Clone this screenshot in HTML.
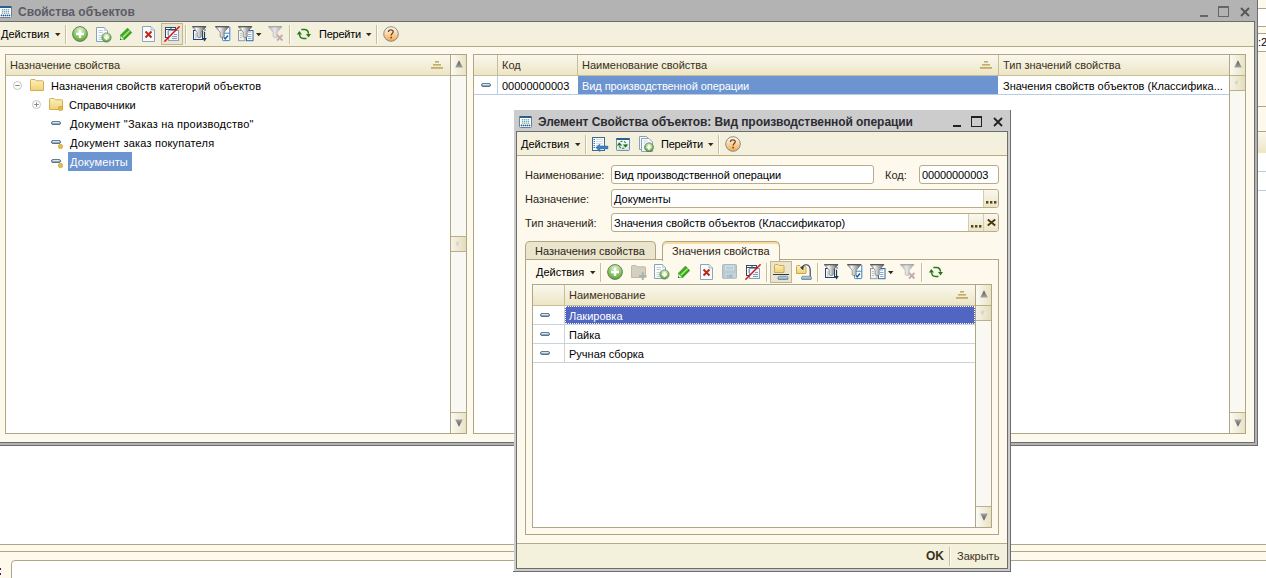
<!DOCTYPE html>
<html><head><meta charset="utf-8">
<style>
*{box-sizing:border-box}
body{margin:0;width:1266px;height:578px;position:relative;overflow:hidden;background:#fff;font-family:"Liberation Sans",sans-serif;font-size:11px;color:#000}
.a{position:absolute}
.t{position:absolute;white-space:nowrap;font-size:11px;line-height:13px}
.kb{border:1px solid #aea684}
.hdr{background:linear-gradient(#f9f8ef,#ede5c4)}
.sep{position:absolute;width:2px;border-left:1px solid #c9bf9c;border-right:1px solid #fffdf6}
svg{position:absolute;overflow:visible}
.sbtn{background:linear-gradient(90deg,#fbfaf3,#e9e2c4)}
.fld{background:#fff;border:1px solid #b8ad88;border-radius:3px}
.btn{background:linear-gradient(#faf8ee,#ebe5cc);border-left:1px solid #d6ccaa}
</style></head><body>
<svg width="0" height="0" style="position:absolute">
<defs>
<radialGradient id="gg" cx="0.5" cy="0.25" r="0.8"><stop offset="0" stop-color="#e4f4d4"/><stop offset="0.5" stop-color="#8fcc6c"/><stop offset="1" stop-color="#4f9e30"/></radialGradient>
<linearGradient id="og" x1="0" y1="0" x2="0" y2="1"><stop offset="0" stop-color="#fffaf0"/><stop offset="0.45" stop-color="#fbd9a8"/><stop offset="1" stop-color="#f3a848"/></linearGradient>
<linearGradient id="fg" x1="0" y1="0" x2="1" y2="0"><stop offset="0" stop-color="#8a8a8a"/><stop offset="0.3" stop-color="#f6f6f6"/><stop offset="0.6" stop-color="#b4b4b4"/><stop offset="1" stop-color="#5e5e5e"/></linearGradient>
<linearGradient id="fgd" x1="0" y1="0" x2="1" y2="0"><stop offset="0" stop-color="#b0b0b0"/><stop offset="0.45" stop-color="#e6e6e6"/><stop offset="1" stop-color="#a8a8a8"/></linearGradient>
<linearGradient id="yf" x1="0" y1="0" x2="0" y2="1"><stop offset="0" stop-color="#fbf0c0"/><stop offset="1" stop-color="#efd274"/></linearGradient>
<linearGradient id="pill" x1="0" y1="0" x2="0" y2="1"><stop offset="0" stop-color="#d4e4ee"/><stop offset="1" stop-color="#7090a8"/></linearGradient>
<linearGradient id="tri2" x1="0" y1="1" x2="0" y2="0"><stop offset="0" stop-color="#555"/><stop offset="1" stop-color="#a4a4a4"/></linearGradient><linearGradient id="tri" x1="0" y1="0" x2="0" y2="1"><stop offset="0" stop-color="#555"/><stop offset="1" stop-color="#a4a4a4"/></linearGradient>
<symbol id="i-plus" viewBox="0 0 16 16"><circle cx="8" cy="8" r="7.4" fill="url(#gg)" stroke="#66735e" stroke-width="0.9"/><path d="M4 8H12M8 4V12" stroke="#fff" stroke-width="2.4"/></symbol>
<symbol id="i-docplus" viewBox="0 0 16 16"><path d="M0.5 0.5H8.5L11.5 3.5V14.5H0.5Z" fill="#fbfdfe" stroke="#86a2b8"/><path d="M8.5 0.5V3.5H11.5" fill="#dce8f0" stroke="#a8bccc" stroke-width="0.6"/><path d="M2.5 3.5H7M2.5 5.5H7M2.5 8.5H6.5M2.5 10.5H6M2.5 12.5H6" stroke="#a8bccb" stroke-width="0.7"/><circle cx="10.5" cy="10.5" r="4.6" fill="url(#gg)" stroke="#6a7a62" stroke-width="0.8"/><path d="M8 10.5H13M10.5 8V13" stroke="#fff" stroke-width="1.8"/></symbol>
<symbol id="i-pencil" viewBox="0 0 12 12"><path d="M7.4 0.2L11.8 4.6L4.2 11.9H0.1V7.5Z" fill="#4fbb2c" stroke="#2e8a18" stroke-width="0.7"/><path d="M1.6 7.6L8.6 1.2M4.2 10.6L10.8 4.2" stroke="#2a8a14" stroke-width="0.9"/><path d="M3 9L9.6 2.6" stroke="#a6ec88" stroke-width="1.3"/><path d="M0.5 7.9L4 11.4H0.5Z" fill="#eef4ea"/><path d="M0 10.2L1.7 11.9H0Z" fill="#1e6a10"/></symbol>
<symbol id="i-docx" viewBox="0 0 13 16"><path d="M0.5 0.5H9L12.5 4V15.5H0.5Z" fill="#f7fbfd" stroke="#8aa6bb"/><path d="M9 0.5V4H12.5" fill="#d8e4ec" stroke="#8aa6bb" stroke-width="0.6"/><path d="M3.5 5.5L9.5 11.5M9.5 5.5L3.5 11.5" stroke="#c02818" stroke-width="2"/></symbol>
<symbol id="i-tabx" viewBox="0 0 16 16"><rect x="1.5" y="1.5" width="10" height="10" fill="#f8fafc" stroke="#34486a"/><path d="M2 2.5H6.5M7.5 2.5H11" stroke="#fff"/><path d="M2 3.5H11M7 2V10" stroke="#34486a"/><path d="M3 6H5.5M3 8H5.5" stroke="#8090a8" stroke-width="0.9"/><rect x="4.5" y="4.5" width="10" height="10" fill="#eef5fa" stroke="#8aa0b6"/><path d="M10 8.5H13M8 10.5H13M8 12.5H13" stroke="#7a90a8" stroke-width="0.9"/><path d="M0.4 15.6L15.6 0.4" stroke="#d41414" stroke-width="1.5"/></symbol>
<symbol id="i-funnel" viewBox="0 0 16 16"><path d="M0.3 0.6H14L9.2 6.2V10.8Q7.2 12.6 5.2 10.8V6.2Z" fill="url(#fg)" stroke="#707070" stroke-width="0.7"/><path d="M0.4 0.6H13.9" stroke="#5a5a5a" stroke-width="1.4"/></symbol>
<symbol id="i-f1" viewBox="0 0 16 16"><rect x="1.5" y="4.5" width="9" height="9" fill="#eef6fb" stroke="#27466c"/><path d="M3 8H4.5M3 10H4.5M3 12H4.5" stroke="#9ab" stroke-width="0.8"/><use href="#i-funnel"/><path d="M12.5 6V12.5" stroke="#1f3a58" stroke-width="1.2"/><path d="M10.2 12H14.8L12.5 15.5Z" fill="#1f3a58"/><path d="M13.5 1L12 2.5L13.5 4L12 5.5" stroke="#3a5a78" stroke-width="0.9" fill="none"/></symbol>
<symbol id="i-f2" viewBox="0 0 16 16"><rect x="7.5" y="0.8" width="7.3" height="13.8" rx="0.8" fill="#fff" stroke="#3a84c4"/><path d="M7.5 7.2H14.8" stroke="#3a84c4"/><path d="M9 11.5L10.2 12.8L13 9.5" stroke="#1e64a8" stroke-width="1.5" fill="none"/><use href="#i-funnel"/></symbol>
<symbol id="i-f3" viewBox="0 0 16 16"><rect x="0.5" y="4.5" width="6.5" height="10.2" fill="#eef4f0" stroke="#9a9a9a"/><rect x="8.5" y="4.5" width="6.5" height="10.2" fill="#fff" stroke="#2f6aa8"/><path d="M2 7.5H4M2 9.5H4M2 11.5H4" stroke="#b0b8b0" stroke-width="0.8"/><path d="M10 6H13.5M10 8.5H13.5M10 10.5H13.5M10 12.5H13.5" stroke="#7090b8" stroke-width="0.8"/><use href="#i-funnel"/></symbol>
<symbol id="i-filterd" viewBox="0 0 16 16"><path d="M0.3 0.6H14L9.2 6.2V10.8Q7.2 12.6 5.2 10.8V6.2Z" fill="url(#fgd)" stroke="#b4b4b4" stroke-width="0.7"/><path d="M0.4 0.6H13.9" stroke="#a8a8a8" stroke-width="1.4"/><path d="M9 9L14.5 14.5M14.5 9L9 14.5" stroke="#c4aab0" stroke-width="1.8"/></symbol>
<symbol id="i-refresh" viewBox="0 0 16 12"><path d="M5.3 1.4H8.5Q12.2 1.4 12.5 5.8" fill="none" stroke="#23801a" stroke-width="1.5"/><path d="M10 6H15L12.5 9.5Z" fill="#237a14"/><path d="M10.5 10.4H7.5Q3.8 10.4 3.5 6.2" fill="none" stroke="#23801a" stroke-width="1.5"/><path d="M0.8 6.6H6L3.4 3.1Z" fill="#237a14"/></symbol>
<symbol id="i-help" viewBox="0 0 16 16"><circle cx="8" cy="8" r="7.3" fill="url(#og)" stroke="#7c8290" stroke-width="0.9"/><path d="M5.4 6C5.4 4.4 6.6 3.9 7.9 3.9C9.3 3.9 10.2 4.7 10.2 5.8C10.2 7.4 8.1 7.5 8.1 9.5" fill="none" stroke="#6a4222" stroke-width="1.25"/><rect x="7.3" y="10.8" width="1.6" height="1.5" fill="#6a4222"/></symbol>
<symbol id="i-folder" viewBox="0 0 14 12"><path d="M0.5 11.5V1.3Q0.5 0.5 1.3 0.5H5L6.2 1.8H12.7Q13.5 1.8 13.5 2.6V11.5Z" fill="url(#yf)" stroke="#d2ad52"/></symbol>
<symbol id="i-pill" viewBox="0 0 10 4"><rect x="0.5" y="0.5" width="9" height="3" rx="1.5" fill="url(#pill)" stroke="#55748c" stroke-width="1"/><path d="M1.8 1.4H8.2" stroke="#e8f2f8" stroke-width="0.8"/></symbol>
<symbol id="i-dot" viewBox="0 0 5 5"><circle cx="2.5" cy="2.5" r="2.2" fill="#e8bc40" stroke="#c89838" stroke-width="0.6"/></symbol>
<symbol id="i-sort" viewBox="0 0 12 8"><g fill="#c2ac6a"><rect x="4" y="0" width="4" height="1.6"/><rect x="2" y="3" width="8" height="1.6"/><rect x="0" y="6" width="12" height="1.8"/></g></symbol>
<symbol id="i-up" viewBox="0 0 8 8"><path d="M4 0.2L7.8 7.6H0.2Z" fill="url(#tri)"/></symbol>
<symbol id="i-down" viewBox="0 0 8 8"><path d="M0.2 0.4H7.8L4 7.8Z" fill="url(#tri2)"/></symbol>
<symbol id="i-listarrow" viewBox="0 0 17 15"><rect x="0.5" y="0.5" width="12" height="13" fill="#fbfdfe" stroke="#46668a"/><path d="M1.5 2.5H3M1.5 4.5H3M1.5 6.5H3M1.5 8.5H3M1.5 10.5H3" stroke="#3a78b8" stroke-width="1"/><path d="M4 2.5H11M4 4.5H11M4 6.5H11M4 8.5H7M9 8.5H11" stroke="#c4ced8" stroke-width="0.7"/><path d="M3.7 10.4L7.9 7V9H16V11.9H7.9V14.7Z" fill="#3c82c0" stroke="#2a6aa0" stroke-width="0.4"/></symbol>
<symbol id="i-winref" viewBox="0 0 14 13"><defs><linearGradient id="wrg" x1="0" y1="0" x2="0" y2="1"><stop offset="0" stop-color="#fff"/><stop offset="1" stop-color="#d4e2ee"/></linearGradient></defs><rect x="0.5" y="0.5" width="13" height="12" rx="0.8" fill="url(#wrg)" stroke="#7890a0"/><rect x="0.3" y="0" width="13.4" height="2" fill="#2a6090"/><circle cx="6.5" cy="6.8" r="3.6" fill="none" stroke="#2a8a18" stroke-width="1.1" stroke-dasharray="2.2 1.4"/><path d="M0.8 7.6H6.2L3.5 4.4Z" fill="#1e7010"/><path d="M6.8 6.5H12.2L9.5 9.4Z" fill="#1e7010"/></symbol>
<symbol id="i-copyplus" viewBox="0 0 15 16"><path d="M0.5 0.5H7.5L9.5 2.5V13.5H0.5Z" fill="#f4f8fb" stroke="#8aa0b8"/><path d="M2.5 2.5H10L13.5 6V15.5H2.5Z" fill="#f7fafc" stroke="#8aa6bb"/><path d="M4.5 5H8.5M4.5 7H6.5" stroke="#b8c6d4" stroke-width="0.8"/><circle cx="10" cy="11.3" r="4.4" fill="url(#gg)" stroke="#5f7058" stroke-width="0.8"/><path d="M7.6 11.3H12.4M10 8.9V13.7" stroke="#fff" stroke-width="1.8"/></symbol>
<symbol id="i-folderplus" viewBox="0 0 16 16"><path d="M0.5 12.5V1.3Q0.5 0.5 1.3 0.5H5L6.2 1.8H13.7Q14.5 1.8 14.5 2.6V12.5Z" fill="#d4cfbf" stroke="#c0baa6"/><path d="M8 11H15.5M11.75 7.2V15" stroke="#aab4aa" stroke-width="2"/></symbol>
<symbol id="i-floppy" viewBox="0 0 15 15"><rect x="0.5" y="0.5" width="14" height="14" rx="1" fill="#b9cad3" stroke="#a8bac4"/><rect x="3" y="1.5" width="9" height="5" fill="#d6e2e8"/><path d="M4 3.3H11M4 5H11" stroke="#a8bac4" stroke-width="0.8"/><rect x="3" y="9" width="11" height="5.5" fill="#c4d2da"/><text x="4.5" y="14" font-size="5.5" font-family="Liberation Sans" font-weight="bold" fill="#9aaab4">ok</text></symbol>
<symbol id="i-grpbtn" viewBox="0 0 16 16"><path d="M1.5 8.5V1.3Q1.5 0.5 2.3 0.5H5L6 1.5H10.2Q11 1.5 11 2.3V8.5Z" fill="url(#yf)" stroke="#cfa84c"/><path d="M0 10.5H16" stroke="#1f3f68" stroke-width="1"/><rect x="5" y="12.3" width="10" height="3.5" rx="1.5" fill="url(#pill)" stroke="#5e7f98" stroke-width="0.8"/></symbol>
<symbol id="i-grpup" viewBox="0 0 16 16"><path d="M0.5 9.5V2.3Q0.5 1.5 1.3 1.5H4L5 2.5H9.2Q10 2.5 10 3.3V9.5Z" fill="url(#yf)" stroke="#cfa84c"/><path d="M6 4Q7 0.5 10.5 0.8Q14 1.2 14.2 6V12.5" fill="none" stroke="#243e5c" stroke-width="1.1"/><path d="M4 3.5L7.8 2.5L7.2 6.2Z" fill="#243e5c"/><rect x="5.5" y="12.3" width="10" height="3.5" rx="1.5" fill="url(#pill)" stroke="#5e7f98" stroke-width="0.8"/></symbol>
<symbol id="i-thumb" viewBox="0 0 15 16"><rect x="0" y="0" width="15" height="16" fill="url(#thg)"/><path d="M0 0.5H15M0 15.5H15" stroke="#b9b08c"/><circle cx="7.6" cy="7.8" r="2.3" fill="url(#thc)"/></symbol><linearGradient id="thc" x1="0" y1="0" x2="1" y2="0.3"><stop offset="0" stop-color="#c4bfaa"/><stop offset="1" stop-color="#f3f0e4"/></linearGradient>
<linearGradient id="thg" x1="0" y1="0" x2="1" y2="0"><stop offset="0" stop-color="#f6f3e6"/><stop offset="1" stop-color="#e4dcbc"/></linearGradient>
<symbol id="i-win" viewBox="0 0 13 12"><rect x="0.5" y="0.5" width="12" height="11" rx="1" fill="#fff" stroke="#6a8098"/><rect x="0.5" y="0" width="12" height="2" fill="#2a6090"/><g fill="#d0f4fb"><rect x="2.5" y="3" width="8" height="5"/></g><g fill="#9a9a9a"><circle cx="3.5" cy="3.6" r="0.65"/><circle cx="5.5" cy="3.6" r="0.65"/><circle cx="7.5" cy="3.6" r="0.65"/><circle cx="9.5" cy="3.6" r="0.65"/><circle cx="3.5" cy="5.4" r="0.65"/><circle cx="5.5" cy="5.4" r="0.65"/><circle cx="7.5" cy="5.4" r="0.65"/><circle cx="9.5" cy="5.4" r="0.65"/><circle cx="3.5" cy="7.2" r="0.65"/><circle cx="5.5" cy="7.2" r="0.65"/><circle cx="7.5" cy="7.2" r="0.65"/><circle cx="9.5" cy="7.2" r="0.65"/></g><g fill="#1f5d99"><circle cx="2.5" cy="9.4" r="0.85"/><circle cx="4.5" cy="9.4" r="0.85"/><circle cx="6.5" cy="9.4" r="0.85"/><circle cx="8.5" cy="9.4" r="0.85"/><circle cx="10.5" cy="9.4" r="0.85"/></g></symbol>
</defs></svg>


<!-- background window strip on right -->
<div class="a" style="left:1258px;top:0;width:8px;height:578px;background:#fff"></div>
<div class="a" style="left:1258px;top:0;width:8px;height:8px;background:#fdf9ec"></div>
<div class="a" style="left:1258px;top:8px;width:8px;height:1px;background:#aea684"></div>
<div class="a" style="left:1258px;top:26px;width:8px;height:1px;background:#aea684"></div>
<div class="a" style="left:1258px;top:27px;width:8px;height:6px;background:#fdf9ec"></div>
<div class="a" style="left:1258px;top:33px;width:8px;height:1px;background:#aea684"></div>
<div class="t" style="left:1258px;top:36px">:2</div>
<div class="a" style="left:1258px;top:51px;width:8px;height:1px;background:#aea684"></div>
<div class="a" style="left:1258px;top:52px;width:8px;height:54px;background:#fdf9ec"></div>
<div class="a" style="left:1258px;top:106px;width:8px;height:1px;background:#aea684"></div>
<div class="a" style="left:1258px;top:107px;width:8px;height:24px;background:#fdf9ec"></div>
<div class="a" style="left:1258px;top:131px;width:8px;height:1px;background:#aea684"></div>
<div class="a hdr" style="left:1258px;top:132px;width:8px;height:21px"></div>
<div class="a" style="left:1258px;top:171px;width:8px;height:1px;background:#b8cce4"></div>
<div class="a" style="left:1258px;top:190px;width:8px;height:1px;background:#b8cce4"></div>

<!-- bottom area -->
<div class="a" style="left:0;top:544px;width:1266px;height:34px;background:#fdf9ec"></div>
<div class="a" style="left:0;top:544px;width:1266px;height:1px;background:#aea684"></div>
<div class="a" style="left:0;top:551px;width:1266px;height:1px;background:#aea684"></div>
<div class="a" style="left:11px;top:560px;width:1300px;height:30px;background:#fff;border:1px solid #aea684;border-radius:4px"></div>
<div class="a" style="left:0;top:568px;width:1px;height:2px;background:#6a1050"></div><div class="a" style="left:0;top:573px;width:1px;height:2px;background:#6a1050"></div>

<!-- MAIN WINDOW -->
<div class="a" style="left:0;top:0;width:1258px;height:446px;background:#b3b3b3"></div>
<div class="a" style="left:1257px;top:0;width:1px;height:446px;background:#6d6d6d"></div>
<div class="a" style="left:0;top:445px;width:1258px;height:1px;background:#6d6d6d"></div>
<div class="a" style="left:0;top:21px;width:1255px;height:422px;background:#6d6d6d"></div>
<div class="a" style="left:0;top:22px;width:1254px;height:420px;background:#fdf9ec"></div>
<div class="a" style="left:0;top:22px;width:1254px;height:24px;background:#f3f0dd"></div>
<div class="a" style="left:0;top:46px;width:1254px;height:1px;background:#b3aa86"></div>

<!-- title -->
<svg style="left:-1px;top:6px" width="13" height="12"><use href="#i-win"/></svg>
<div class="t" style="left:18px;top:6px;font-size:12px;font-weight:bold;color:#5b5b66">Свойства объектов</div>
<div class="a" style="left:1200px;top:15px;width:8px;height:2px;background:#666"></div>
<div class="a" style="left:1218px;top:6px;width:11px;height:11px;border:1px solid #666;border-top-width:2px"></div>
<svg style="left:1240px;top:7px" width="10" height="10" viewBox="0 0 10 10"><path d="M1 1L9 9M9 1L1 9" stroke="#555" stroke-width="1.8"/></svg>

<!-- main toolbar -->
<div class="t" style="left:1px;top:28px">Действия</div>
<svg style="left:55px;top:33px" width="6" height="4"><path d="M0 0H5.5L2.75 3.2Z" fill="#3a2a10"/></svg>
<div class="sep" style="left:65px;top:25px;height:19px"></div>
<div class="t" style="left:319px;top:28px;letter-spacing:-0.25px">Перейти</div>
<svg style="left:366px;top:33px" width="6" height="4"><path d="M0 0H5.5L2.75 3.2Z" fill="#3a2a10"/></svg>

<!-- LEFT PANEL -->
<div class="a kb" style="left:5px;top:54px;width:462px;height:380px;background:#fff"></div>
<div class="a hdr" style="left:6px;top:55px;width:444px;height:20px"></div>
<div class="a" style="left:6px;top:75px;width:444px;height:1px;background:#c8bd98"></div>
<div class="t" style="left:10px;top:59px;color:#3a3020">Назначение свойства</div>
<div class="a" style="left:450px;top:55px;width:1px;height:378px;background:#aea684"></div>
<div class="a" style="left:451px;top:76px;width:15px;height:336px;background:#f9f8f2"></div>
<div class="a sbtn" style="left:451px;top:55px;width:15px;height:21px;border-bottom:1px solid #b9b08c"></div>

<!-- tree -->
<div class="t" style="left:51px;top:80px;letter-spacing:0.08px">Назначения свойств категорий объектов</div>
<div class="t" style="left:69px;top:99px">Справочники</div>
<div class="t" style="left:70px;top:118px;letter-spacing:0.22px">Документ "Заказ на производство"</div>
<div class="t" style="left:70px;top:137px;letter-spacing:0.19px">Документ заказ покупателя</div>
<div class="a" style="left:68px;top:152px;width:64px;height:19px;background:#6b94d0"></div>
<div class="t" style="left:70px;top:156px;color:#fff;letter-spacing:0.13px">Документы</div>

<!-- RIGHT PANEL -->
<div class="a kb" style="left:473px;top:54px;width:773px;height:380px;background:#fff"></div>
<div class="a hdr" style="left:474px;top:55px;width:755px;height:20px"></div>
<div class="a" style="left:474px;top:75px;width:755px;height:1px;background:#c8bd98"></div>
<div class="a" style="left:497px;top:55px;width:1px;height:20px;background:#c8bd98"></div>
<div class="a" style="left:577px;top:55px;width:1px;height:20px;background:#c8bd98"></div>
<div class="a" style="left:998px;top:55px;width:1px;height:20px;background:#c8bd98"></div>
<div class="t" style="left:502px;top:59px;color:#3a3020">Код</div>
<div class="t" style="left:582px;top:59px;color:#3a3020">Наименование свойства</div>
<div class="t" style="left:1003px;top:59px;color:#3a3020">Тип значений свойства</div>
<div class="a" style="left:1229px;top:55px;width:1px;height:378px;background:#aea684"></div>
<div class="a" style="left:1230px;top:76px;width:15px;height:336px;background:#f9f8f2"></div>
<div class="a sbtn" style="left:1230px;top:55px;width:15px;height:21px;border-bottom:1px solid #b9b08c"></div>
<div class="a" style="left:474px;top:94px;width:755px;height:1px;background:#b8cce4"></div>
<div class="a" style="left:497px;top:76px;width:1px;height:18px;background:#b8cce4"></div>
<div class="a" style="left:578px;top:76px;width:420px;height:18px;background:#6b94d0"></div>
<div class="t" style="left:502px;top:80px">00000000003</div>
<div class="t" style="left:582px;top:80px;color:#fff;letter-spacing:-0.07px">Вид производственной операции</div>
<div class="t" style="left:1003px;top:80px">Значения свойств объектов (Классифика...</div>



<svg style="left:72px;top:26px" width="16" height="16"><use href="#i-plus"/></svg>
<svg style="left:96px;top:27px" width="16" height="16"><use href="#i-docplus"/></svg>
<svg style="left:120px;top:28px" width="12" height="12"><use href="#i-pencil"/></svg>
<svg style="left:142px;top:26px" width="13" height="16"><use href="#i-docx"/></svg>
<div class="a" style="left:161px;top:23px;width:22px;height:22px;background:#ebe5cf;border:1px solid #c2b68e"></div>
<svg style="left:164px;top:26px" width="16" height="16"><use href="#i-tabx"/></svg>
<div class="sep" style="left:185px;top:25px;height:19px"></div>
<svg style="left:192px;top:26px" width="16" height="16"><use href="#i-f1"/></svg>
<svg style="left:215px;top:26px" width="16" height="16"><use href="#i-f2"/></svg>
<svg style="left:238px;top:26px" width="16" height="16"><use href="#i-f3"/></svg>
<svg style="left:256px;top:33px" width="6" height="4"><path d="M0 0H5.5L2.75 3.2Z" fill="#3a2a10"/></svg>
<svg style="left:268px;top:26px" width="16" height="16"><use href="#i-filterd"/></svg>
<div class="sep" style="left:289px;top:25px;height:19px"></div>
<svg style="left:296px;top:28px" width="16" height="12"><use href="#i-refresh"/></svg>
<div class="sep" style="left:376px;top:25px;height:19px"></div>
<svg style="left:383px;top:26px" width="16" height="16"><use href="#i-help"/></svg>

<!-- tree icons -->
<svg style="left:13px;top:81px" width="9" height="9" viewBox="0 0 9 9"><circle cx="4.5" cy="4.5" r="4" fill="#fff" stroke="#c4c4c4"/><path d="M2.2 4.5H6.8" stroke="#8a8a8a"/></svg>
<svg style="left:30px;top:79px" width="14" height="12"><use href="#i-folder"/></svg>
<svg style="left:32px;top:100px" width="9" height="9" viewBox="0 0 9 9"><circle cx="4.5" cy="4.5" r="4" fill="#fff" stroke="#c4c4c4"/><path d="M2.2 4.5H6.8M4.5 2.2V6.8" stroke="#8a8a8a"/></svg>
<svg style="left:49px;top:98px" width="14" height="12"><use href="#i-folder"/></svg>
<svg style="left:58px;top:106px" width="5" height="5"><use href="#i-dot"/></svg>
<svg style="left:51px;top:121px" width="10" height="4"><use href="#i-pill"/></svg>
<svg style="left:51px;top:140px" width="10" height="4"><use href="#i-pill"/></svg>
<svg style="left:58px;top:144px" width="5" height="5"><use href="#i-dot"/></svg>
<svg style="left:51px;top:159px" width="10" height="4"><use href="#i-pill"/></svg>
<svg style="left:58px;top:163px" width="5" height="5"><use href="#i-dot"/></svg>

<!-- panel header icons -->
<svg style="left:431px;top:61px" width="12" height="8"><use href="#i-sort"/></svg>
<svg style="left:455px;top:60px" width="8" height="8"><use href="#i-up"/></svg>
<svg style="left:980px;top:61px" width="12" height="8"><use href="#i-sort"/></svg>
<svg style="left:1234px;top:60px" width="8" height="8"><use href="#i-up"/></svg>
<svg style="left:481px;top:83px" width="10" height="4"><use href="#i-pill"/></svg>


<div class="a" style="left:451px;top:412px;width:15px;height:21px;background:linear-gradient(90deg,#fbfaf3,#e9e2c4);border-top:1px solid #b9b08c"></div>
<svg style="left:455px;top:419px" width="8" height="8"><use href="#i-down"/></svg>
<svg style="left:451px;top:236px" width="15" height="16"><use href="#i-thumb"/></svg>
<div class="a" style="left:1230px;top:412px;width:15px;height:21px;background:linear-gradient(90deg,#fbfaf3,#e9e2c4);border-top:1px solid #b9b08c"></div>
<svg style="left:1234px;top:419px" width="8" height="8"><use href="#i-down"/></svg>
<svg style="left:1230px;top:75px" width="15" height="16"><use href="#i-thumb"/></svg>

<!-- DIALOG -->
<div class="a" style="left:514px;top:110px;width:497px;height:462px;background:#cccccc"></div>
<div class="a" style="left:1010px;top:110px;width:1px;height:462px;background:#6d6d6d"></div>
<div class="a" style="left:513px;top:571px;width:498px;height:1px;background:#6d6d6d"></div>
<div class="a" style="left:516px;top:131px;width:492px;height:438px;border:1px solid #6d6d6d;background:#fdf9ec"></div>
<div class="a" style="left:517px;top:132px;width:490px;height:23px;background:#f3f0dd"></div>
<div class="a" style="left:517px;top:155px;width:490px;height:1px;background:#b3aa86"></div>
<div class="a" style="left:517px;top:543px;width:490px;height:1px;background:#b3aa86"></div>
<div class="a" style="left:517px;top:544px;width:490px;height:24px;background:#f3f0dc"></div>
<svg style="left:519px;top:116px" width="13" height="12"><use href="#i-win"/></svg>
<div class="t" style="left:538px;top:116px;font-size:12px;font-weight:bold;color:#2c2c34;letter-spacing:-0.07px">Элемент Свойства объектов: Вид производственной операции</div>
<div class="a" style="left:953px;top:125px;width:8px;height:2px;background:#222"></div>
<div class="a" style="left:971px;top:116px;width:11px;height:11px;border:1px solid #222;border-top-width:2px"></div>
<svg style="left:993px;top:117px" width="10" height="10" viewBox="0 0 10 10"><path d="M1 1L9 9M9 1L1 9" stroke="#222" stroke-width="1.8"/></svg>

<div class="t" style="left:521px;top:138px">Действия</div>
<svg style="left:575px;top:143px" width="6" height="4"><path d="M0 0H5.5L2.75 3.2Z" fill="#3a2a10"/></svg>
<div class="sep" style="left:585px;top:135px;height:19px"></div>
<div class="t" style="left:661px;top:138px;letter-spacing:-0.25px">Перейти</div>
<svg style="left:708px;top:143px" width="6" height="4"><path d="M0 0H5.5L2.75 3.2Z" fill="#3a2a10"/></svg>
<div class="sep" style="left:718px;top:135px;height:19px"></div>

<div class="t" style="left:525px;top:169px;color:#2a2418">Наименование:</div>
<div class="t" style="left:525px;top:193px;color:#2a2418">Назначение:</div>
<div class="t" style="left:525px;top:217px;color:#2a2418">Тип значений:</div>
<div class="t" style="left:885px;top:169px;color:#2a2418">Код:</div>
<div class="a fld" style="left:611px;top:165px;width:263px;height:19px"></div>
<div class="t" style="left:614px;top:169px;letter-spacing:-0.07px">Вид производственной операции</div>
<div class="a fld" style="left:919px;top:165px;width:80px;height:19px"></div>
<div class="t" style="left:922px;top:169px;letter-spacing:-0.1px">00000000003</div>
<div class="a fld" style="left:611px;top:189px;width:388px;height:19px"></div>
<div class="a btn" style="left:983px;top:190px;width:15px;height:17px;border-radius:0 3px 3px 0"></div>
<div class="t" style="left:614px;top:193px">Документы</div>
<div class="a fld" style="left:611px;top:213px;width:388px;height:19px"></div>
<div class="a btn" style="left:968px;top:214px;width:15px;height:17px"></div>
<div class="a btn" style="left:983px;top:214px;width:15px;height:17px;border-radius:0 3px 3px 0"></div>
<div class="t" style="left:614px;top:217px">Значения свойств объектов (Классификатор)</div>

<!-- tabs -->
<div class="a" style="left:525px;top:241px;width:131px;height:19px;background:#ebe5cd;border:1px solid #aea684;border-bottom:none;border-radius:5px 5px 0 0"></div>
<div class="t" style="left:535px;top:245px;color:#2a2418">Назначения свойства</div>
<div class="a" style="left:525px;top:259px;width:474px;height:276px;border:1px solid #aea684"></div>
<div class="a" style="left:662px;top:241px;width:118px;height:20px;background:#fdf9ec;border:1px solid #aea684;border-bottom:none;border-radius:5px 5px 0 0;box-shadow:inset 0 2px 0 #f9daa2"></div>
<div class="t" style="left:672px;top:245px;color:#2a2418">Значения свойства</div>
<div class="t" style="left:536px;top:266px">Действия</div>

<!-- table -->
<div class="a kb" style="left:532px;top:284px;width:460px;height:244px;background:#fff"></div>
<div class="a hdr" style="left:533px;top:285px;width:442px;height:20px"></div>
<div class="a" style="left:533px;top:305px;width:442px;height:1px;background:#c8bd98"></div>
<div class="a" style="left:564px;top:285px;width:1px;height:20px;background:#c8bd98"></div>
<div class="t" style="left:569px;top:289px;color:#3a3020">Наименование</div>
<div class="a" style="left:975px;top:285px;width:1px;height:242px;background:#aea684"></div>
<div class="a" style="left:976px;top:306px;width:15px;height:200px;background:#f9f8f2"></div>
<div class="a sbtn" style="left:976px;top:285px;width:15px;height:21px;border-bottom:1px solid #b9b08c"></div>
<div class="a" style="left:533px;top:324px;width:442px;height:1px;background:#cbd2d9"></div>
<div class="a" style="left:533px;top:343px;width:442px;height:1px;background:#cbd2d9"></div>
<div class="a" style="left:533px;top:362px;width:442px;height:1px;background:#cbd2d9"></div>
<div class="a" style="left:564px;top:306px;width:1px;height:56px;background:#cbd2d9"></div>
<div class="a" style="left:565px;top:306px;width:410px;height:18px;background:#5066c0;border:1px dotted #fff"></div>
<div class="t" style="left:569px;top:310px;color:#fff">Лакировка</div>
<div class="t" style="left:569px;top:329px">Пайка</div>
<div class="t" style="left:569px;top:348px">Ручная сборка</div>


<svg style="left:592px;top:137px" width="17" height="15"><use href="#i-listarrow"/></svg>
<svg style="left:616px;top:138px" width="14" height="13"><use href="#i-winref"/></svg>
<svg style="left:639px;top:136px" width="15" height="16"><use href="#i-copyplus"/></svg>
<svg style="left:725px;top:136px" width="16" height="16"><use href="#i-help"/></svg>

<svg style="left:590px;top:271px" width="6" height="4"><path d="M0 0H5.5L2.75 3.2Z" fill="#3a2a10"/></svg>
<div class="sep" style="left:600px;top:263px;height:19px"></div>
<svg style="left:607px;top:264px" width="16" height="16"><use href="#i-plus"/></svg>
<svg style="left:631px;top:265px" width="16" height="16"><use href="#i-folderplus"/></svg>
<svg style="left:654px;top:264px" width="16" height="16"><use href="#i-docplus"/></svg>
<svg style="left:678px;top:266px" width="12" height="12"><use href="#i-pencil"/></svg>
<svg style="left:700px;top:264px" width="13" height="16"><use href="#i-docx"/></svg>
<svg style="left:722px;top:264px" width="15" height="15"><use href="#i-floppy"/></svg>
<svg style="left:745px;top:264px" width="16" height="16"><use href="#i-tabx"/></svg>
<div class="sep" style="left:766px;top:263px;height:19px"></div>
<div class="a" style="left:770px;top:261px;width:22px;height:22px;background:#ebe5cf;border:1px solid #c2b68e"></div>
<svg style="left:773px;top:264px" width="16" height="16"><use href="#i-grpbtn"/></svg>
<svg style="left:796px;top:264px" width="16" height="16"><use href="#i-grpup"/></svg>
<div class="sep" style="left:817px;top:263px;height:19px"></div>
<svg style="left:824px;top:264px" width="16" height="16"><use href="#i-f1"/></svg>
<svg style="left:847px;top:264px" width="16" height="16"><use href="#i-f2"/></svg>
<svg style="left:870px;top:264px" width="16" height="16"><use href="#i-f3"/></svg>
<svg style="left:888px;top:271px" width="6" height="4"><path d="M0 0H5.5L2.75 3.2Z" fill="#3a2a10"/></svg>
<svg style="left:900px;top:264px" width="16" height="16"><use href="#i-filterd"/></svg>
<div class="sep" style="left:921px;top:263px;height:19px"></div>
<svg style="left:928px;top:266px" width="16" height="12"><use href="#i-refresh"/></svg>

<svg style="left:956px;top:291px" width="12" height="8"><use href="#i-sort"/></svg>
<svg style="left:980px;top:290px" width="8" height="8"><use href="#i-up"/></svg>
<svg style="left:980px;top:513px" width="8" height="8"><use href="#i-down"/></svg>
<svg style="left:540px;top:313px" width="10" height="4"><use href="#i-pill"/></svg>
<svg style="left:540px;top:332px" width="10" height="4"><use href="#i-pill"/></svg>
<svg style="left:540px;top:351px" width="10" height="4"><use href="#i-pill"/></svg>

<svg style="left:986px;top:201px" width="11" height="3"><g fill="#5a4818"><rect x="0" y="0" width="2.4" height="2.6"/><rect x="4" y="0" width="2.4" height="2.6"/><rect x="8" y="0" width="2.4" height="2.6"/></g></svg>
<svg style="left:971px;top:225px" width="11" height="3"><g fill="#5a4818"><rect x="0" y="0" width="2.4" height="2.6"/><rect x="4" y="0" width="2.4" height="2.6"/><rect x="8" y="0" width="2.4" height="2.6"/></g></svg>
<svg style="left:987px;top:219px" width="9" height="7" viewBox="0 0 9 7"><path d="M0.8 0.5L8.2 6.5M8.2 0.5L0.8 6.5" stroke="#4a3a08" stroke-width="1.9"/></svg>

<div class="a" style="left:976px;top:506px;width:15px;height:21px;background:linear-gradient(90deg,#fbfaf3,#e9e2c4);border-top:1px solid #b9b08c"></div>
<svg style="left:980px;top:513px" width="8" height="8"><use href="#i-down"/></svg>
<svg style="left:976px;top:305px" width="15" height="16"><use href="#i-thumb"/></svg>
<div class="t" style="left:926px;top:550px;font-size:12px;font-weight:bold;color:#3a3020">OK</div>
<div class="sep" style="left:949px;top:547px;height:19px"></div>
<div class="t" style="left:957px;top:550px;color:#3a3020">Закрыть</div>
</body></html>
